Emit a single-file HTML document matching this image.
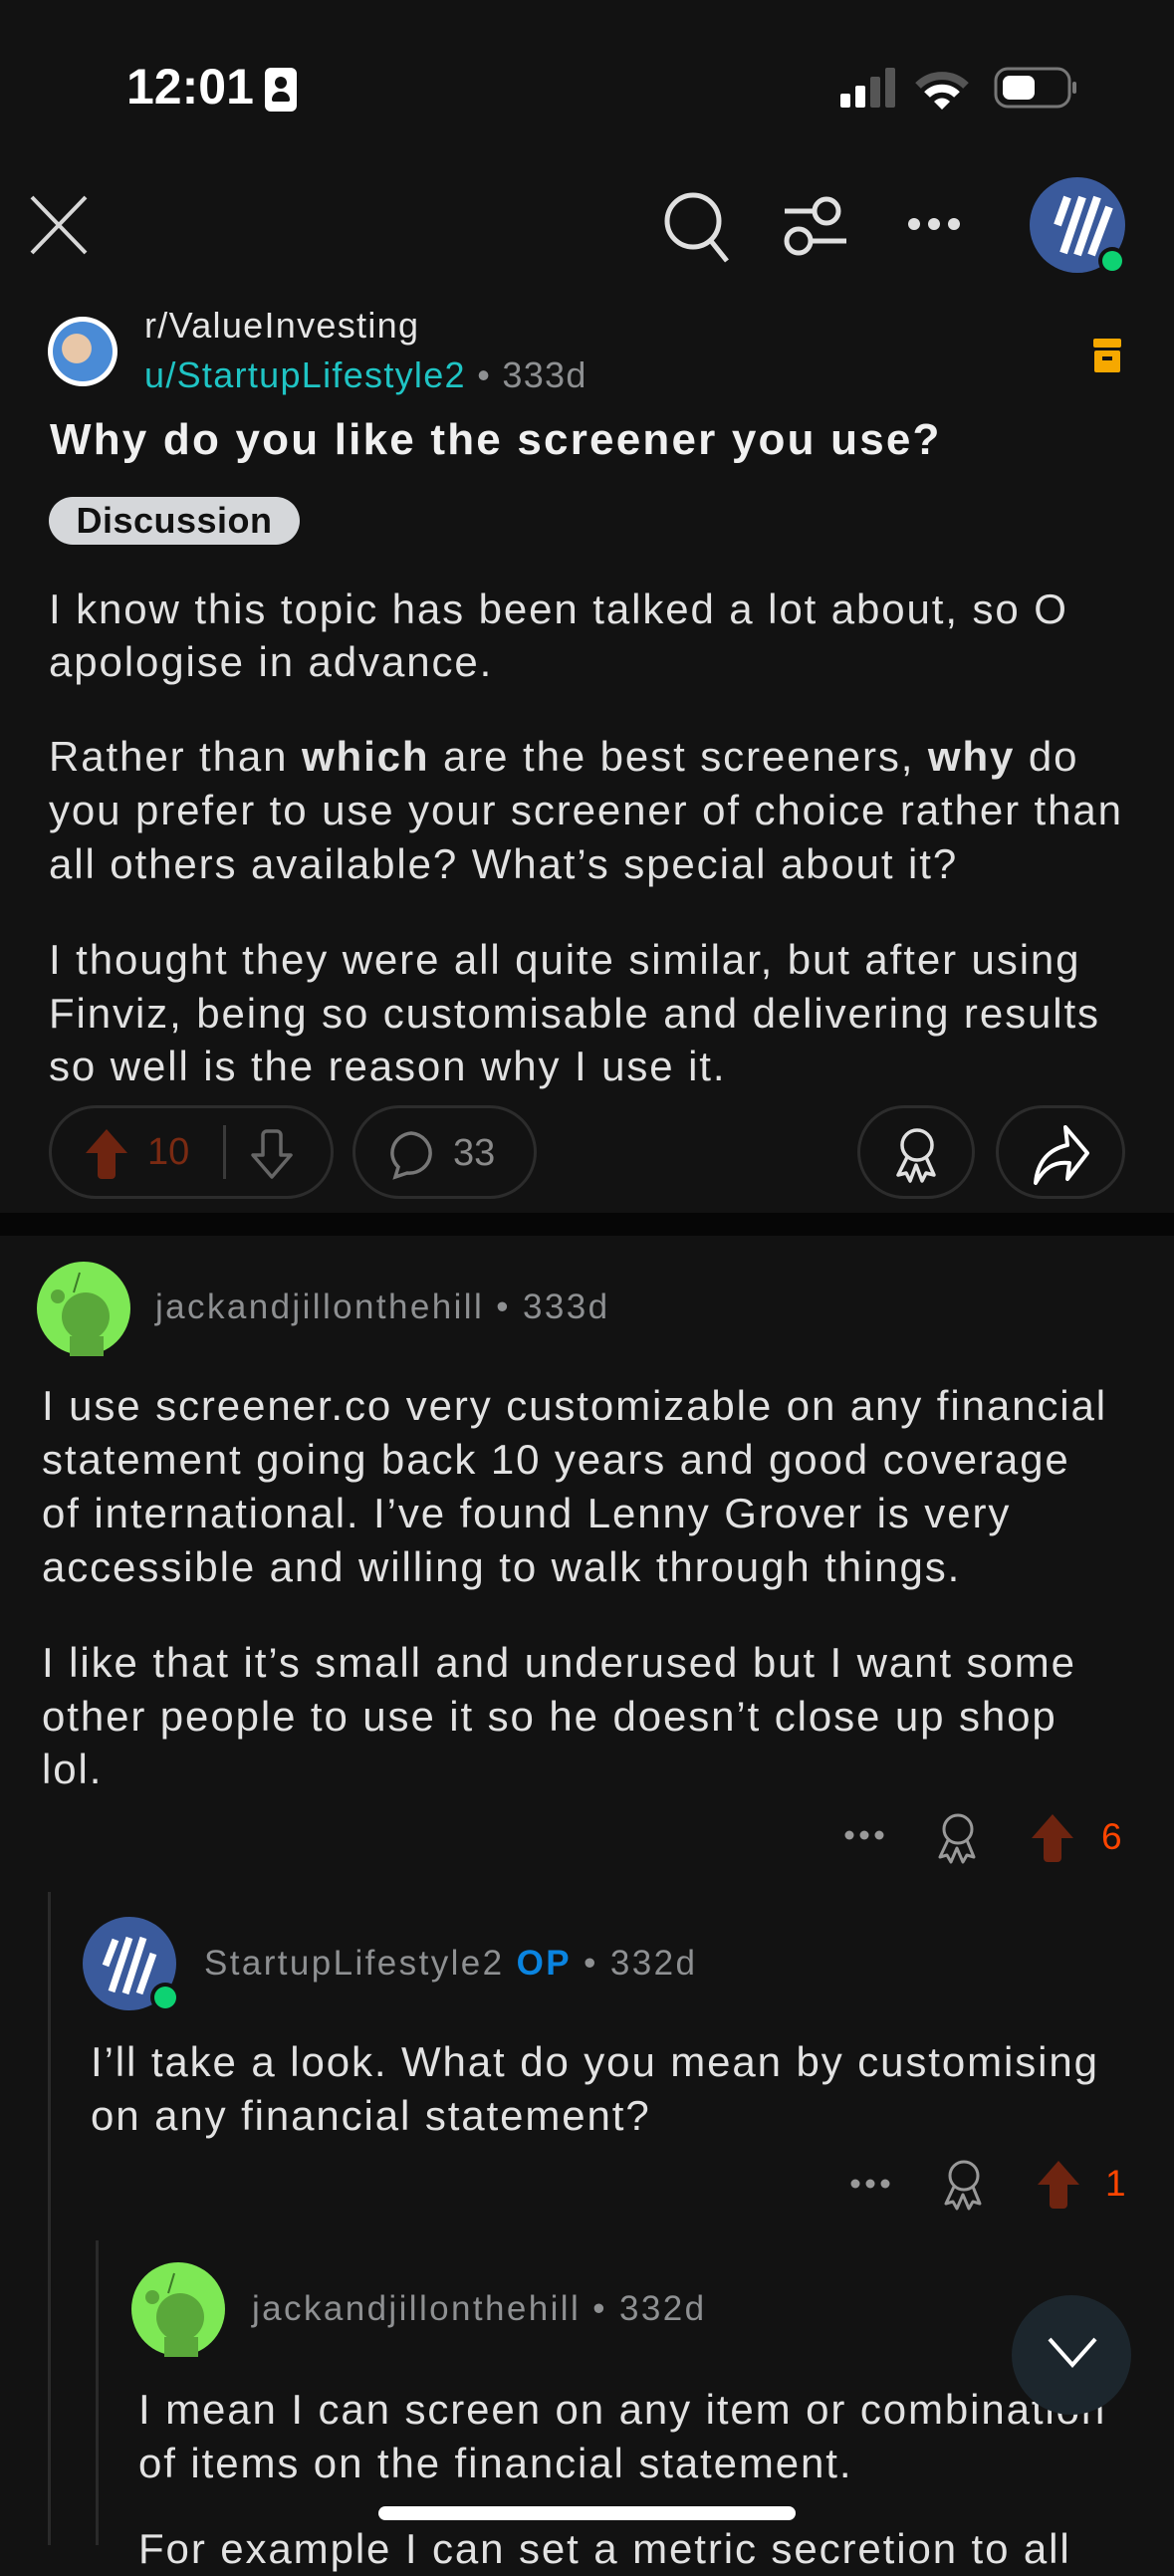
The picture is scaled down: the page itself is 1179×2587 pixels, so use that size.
<!DOCTYPE html>
<html><head><meta charset="utf-8"><style>
*{margin:0;padding:0;box-sizing:border-box}
body{width:1179px;height:2556px;background:#121212;overflow:hidden;position:relative;font-family:"Liberation Sans",sans-serif;color:#e3e3e3}
.a{position:absolute;white-space:nowrap}
.t{font-size:42px;line-height:54px;color:#e2e2e2;letter-spacing:1.9px}
.m{font-size:35px;line-height:40px;color:#8e9092;letter-spacing:2.4px}
.pill{position:absolute;border:3px solid #2c2c2c;border-radius:48px}
</style></head><body>
<!-- status bar -->
<div class="a" style="left:127px;top:58px;font-size:50px;font-weight:bold;color:#fff;letter-spacing:0px">12:01</div>
<div class="a" style="left:266px;top:68px;width:32px;height:44px;background:#fff;border-radius:6px"><div style="position:absolute;left:10px;top:9px;width:12px;height:12px;border-radius:50%;background:#121212"></div><div style="position:absolute;left:7px;top:24px;width:18px;height:10px;border-radius:8px 8px 2px 2px;background:#121212"></div></div>
<svg class="a" style="left:842px;top:66px" width="240" height="46">
<rect x="2" y="28" width="10" height="14" rx="2" fill="#fff"/><rect x="17" y="20" width="10" height="22" rx="2" fill="#fff"/><rect x="32" y="11" width="10" height="31" rx="2" fill="#555"/><rect x="47" y="2" width="10" height="40" rx="2" fill="#555"/>
<path d="M80 20 a34 34 0 0 1 48 0" stroke="#555" stroke-width="8" fill="none"/><path d="M89 29 a21 21 0 0 1 30 0" stroke="#fff" stroke-width="8" fill="none"/><path d="M96 36 l8 8 l8 -8 a11 11 0 0 0 -16 0z" fill="#fff"/>
<rect x="158" y="3" width="74" height="38" rx="12" stroke="#777" stroke-width="3" fill="none"/><rect x="165" y="10" width="32" height="24" rx="7" fill="#fff"/><rect x="235" y="16" width="4" height="12" rx="2" fill="#777"/>
</svg>
<!-- nav -->
<svg class="a" style="left:28px;top:194px" width="64" height="64"><path d="M4 4 L58 60 M58 4 L4 60" stroke="#d8d8d8" stroke-width="4"/></svg>
<svg class="a" style="left:664px;top:190px" width="72" height="76"><circle cx="32" cy="32" r="26" stroke="#e0e0e0" stroke-width="5" fill="none"/><path d="M50 52 L66 72" stroke="#e0e0e0" stroke-width="5"/></svg>
<svg class="a" style="left:784px;top:196px" width="70" height="66"><circle cx="46" cy="16" r="12" stroke="#e0e0e0" stroke-width="5" fill="none"/><circle cx="18" cy="46" r="12" stroke="#e0e0e0" stroke-width="5" fill="none"/><path d="M4 16 H34 M30 46 H66" stroke="#e0e0e0" stroke-width="5"/></svg>
<svg class="a" style="left:908px;top:214px" width="60" height="22"><circle cx="10" cy="11" r="6" fill="#e0e0e0"/><circle cx="30" cy="11" r="6" fill="#e0e0e0"/><circle cx="50" cy="11" r="6" fill="#e0e0e0"/></svg>
<svg class="a" style="left:1032px;top:176px" width="104" height="104"><circle cx="50" cy="50" r="48" fill="#3a5a9c"/><path d="M30 50 L40 22 M36 78 L55 22 M50 80 L70 22 M64 80 L82 32" stroke="#fff" stroke-width="8"/><circle cx="85" cy="86" r="14" fill="#121212"/><circle cx="85" cy="86" r="10" fill="#0dd272"/></svg>
<!-- subreddit -->
<div class="a" style="left:48px;top:318px;width:70px;height:70px;border-radius:50%;background:#fff;padding:5px"><div style="width:60px;height:60px;border-radius:50%;background:radial-gradient(circle at 40% 45%,#e8c7a8 0 30%,#4a8bd6 31%)"></div></div>
<div class="a" style="left:145px;top:306px;font-size:36px;color:#e6e6e6;letter-spacing:1.3px">r/ValueInvesting</div>
<div class="a" style="left:145px;top:356px;font-size:36px;color:#1fc4c4;letter-spacing:1.3px">u/StartupLifestyle2 <span style="color:#8e9092">• 333d</span></div>
<svg class="a" style="left:1098px;top:340px" width="30" height="36"><rect x="0" y="0" width="28" height="9" rx="2" fill="#f6a800"/><rect x="1" y="12" width="26" height="22" rx="2" fill="#f6a800"/><rect x="9" y="18" width="10" height="4" fill="#121212"/></svg>
<div class="a" style="left:50px;top:417px;font-size:44px;font-weight:bold;color:#f0f0f0;letter-spacing:2.2px">Why do you like the screener you use?</div>
<div class="a" style="left:49px;top:499px;width:252px;height:48px;border-radius:24px;background:#d5d7da;color:#111;font-size:36px;font-weight:bold;line-height:48px;text-align:center;letter-spacing:0.5px">Discussion</div>
<!-- body -->
<div class="a t" style="left:49px;top:585px">I know this topic has been talked a lot about, so O</div>
<div class="a t" style="left:49px;top:638px">apologise in advance.</div>
<div class="a t" style="left:49px;top:733px">Rather than <b>which</b> are the best screeners, <b>why</b> do</div>
<div class="a t" style="left:49px;top:787px">you prefer to use your screener of choice rather than</div>
<div class="a t" style="left:49px;top:841px">all others available? What’s special about it?</div>
<div class="a t" style="left:49px;top:937px">I thought they were all quite similar, but after using</div>
<div class="a t" style="left:49px;top:991px">Finviz, being so customisable and delivering results</div>
<div class="a t" style="left:49px;top:1044px">so well is the reason why I use it.</div>
<!-- actions -->
<div class="pill" style="left:49px;top:1110px;width:286px;height:94px"></div>
<svg class="a" style="left:84px;top:1132px" width="46" height="52"><path d="M23 2 L44 26 H32 V48 a4 4 0 0 1 -4 4 H18 a4 4 0 0 1 -4 -4 V26 H2 Z" fill="#6e2410"/></svg>
<div class="a" style="left:148px;top:1136px;font-size:38px;color:#7a2a12">10</div>
<div class="a" style="left:224px;top:1130px;width:3px;height:54px;background:#3a3a3a"></div>
<svg class="a" style="left:250px;top:1134px" width="46" height="52"><path d="M23 48 L42 26 H32 V6 a4 4 0 0 0 -4 -4 H18 a4 4 0 0 0 -4 4 V26 H4 Z" stroke="#666" stroke-width="3.5" fill="none" stroke-linejoin="round"/></svg>
<div class="pill" style="left:354px;top:1110px;width:185px;height:94px"></div>
<svg class="a" style="left:388px;top:1134px" width="50" height="52"><path d="M25 4 a21 20 0 1 1 -4 40 l-12 4 l3 -10 a21 20 0 0 1 13 -34z" stroke="#777" stroke-width="3.5" fill="none"/></svg>
<div class="a" style="left:455px;top:1137px;font-size:38px;color:#8a8a8a">33</div>
<div class="pill" style="left:861px;top:1110px;width:118px;height:94px"></div>
<svg class="a" style="left:896px;top:1130px" width="50" height="60"><circle cx="25" cy="20" r="15" stroke="#e0e0e0" stroke-width="3.5" fill="none"/><path d="M15 32 L6 50 L14 48 L18 56 L24 40 L30 56 L34 48 L42 50 L34 32" stroke="#e0e0e0" stroke-width="3.5" fill="none" stroke-linejoin="round"/></svg>
<div class="pill" style="left:1000px;top:1110px;width:130px;height:94px"></div>
<svg class="a" style="left:1036px;top:1128px" width="60" height="66"><path d="M34 4 L56 30 L36 56 L38 40 C22 38 12 46 4 60 C6 38 18 26 36 22 Z" stroke="#fff" stroke-width="4" fill="none" stroke-linejoin="round"/></svg>
<div class="a" style="left:0;top:1218px;width:1179px;height:23px;background:#060606"></div>
<!-- comment 1 -->
<svg class="a" style="left:36px;top:1266px" width="96" height="96"><circle cx="48" cy="48" r="47" fill="#7ee855"/><circle cx="50" cy="56" r="24" fill="#5aa83a"/><circle cx="22" cy="36" r="7" fill="#5aa83a"/><path d="M38 32 L44 12" stroke="#3c7a28" stroke-width="2"/><rect x="34" y="76" width="34" height="20" fill="#5aa83a"/></svg>
<div class="a m" style="left:156px;top:1293px">jackandjillonthehill • 333d</div>
<div class="a t" style="left:42px;top:1385px">I use screener.co very customizable on any financial</div>
<div class="a t" style="left:42px;top:1439px">statement going back 10 years and good coverage</div>
<div class="a t" style="left:42px;top:1493px">of international. I’ve found Lenny Grover is very</div>
<div class="a t" style="left:42px;top:1547px">accessible and willing to walk through things.</div>
<div class="a t" style="left:42px;top:1643px">I like that it’s small and underused but I want some</div>
<div class="a t" style="left:42px;top:1697px">other people to use it so he doesn’t close up shop</div>
<div class="a t" style="left:42px;top:1750px">lol.</div>
<svg class="a" style="left:846px;top:1834px" width="44" height="18"><circle cx="7" cy="9" r="4.5" fill="#999"/><circle cx="22" cy="9" r="4.5" fill="#999"/><circle cx="37" cy="9" r="4.5" fill="#999"/></svg>
<svg class="a" style="left:938px;top:1818px" width="48" height="56"><circle cx="24" cy="19" r="14" stroke="#999" stroke-width="3" fill="none"/><path d="M14 30 L6 47 L13 45 L17 52 L23 38 L29 52 L33 45 L40 47 L33 30" stroke="#999" stroke-width="3" fill="none" stroke-linejoin="round"/></svg>
<svg class="a" style="left:1034px;top:1820px" width="46" height="52"><path d="M23 2 L44 26 H32 V46 a4 4 0 0 1 -4 4 H18 a4 4 0 0 1 -4 -4 V26 H2 Z" fill="#6e2410"/></svg>
<div class="a" style="left:1106px;top:1824px;font-size:37px;color:#ff4500">6</div>
<div class="a" style="left:48px;top:1900px;width:3px;height:656px;background:#2a2a2a"></div>
<!-- reply 1 -->
<svg class="a" style="left:82px;top:1922px" width="104" height="104"><circle cx="48" cy="50" r="47" fill="#3a5a9c"/><path d="M24 52 L34 26 M30 78 L48 24 M44 80 L62 24 M58 80 L72 40" stroke="#fff" stroke-width="7"/><circle cx="84" cy="84" r="15" fill="#121212"/><circle cx="84" cy="84" r="11" fill="#0dd272"/></svg>
<div class="a m" style="left:205px;top:1952px">StartupLifestyle2 <b style="color:#0a84e0;font-weight:bold">OP</b> • 332d</div>
<div class="a t" style="left:91px;top:2044px">I’ll take a look. What do you mean by customising</div>
<div class="a t" style="left:91px;top:2098px">on any financial statement?</div>
<svg class="a" style="left:852px;top:2184px" width="44" height="18"><circle cx="7" cy="9" r="4.5" fill="#999"/><circle cx="22" cy="9" r="4.5" fill="#999"/><circle cx="37" cy="9" r="4.5" fill="#999"/></svg>
<svg class="a" style="left:944px;top:2166px" width="48" height="56"><circle cx="24" cy="19" r="14" stroke="#999" stroke-width="3" fill="none"/><path d="M14 30 L6 47 L13 45 L17 52 L23 38 L29 52 L33 45 L40 47 L33 30" stroke="#999" stroke-width="3" fill="none" stroke-linejoin="round"/></svg>
<svg class="a" style="left:1040px;top:2168px" width="46" height="52"><path d="M23 2 L44 26 H32 V46 a4 4 0 0 1 -4 4 H18 a4 4 0 0 1 -4 -4 V26 H2 Z" fill="#6e2410"/></svg>
<div class="a" style="left:1110px;top:2172px;font-size:37px;color:#ff4500">1</div>
<div class="a" style="left:96px;top:2250px;width:3px;height:306px;background:#2a2a2a"></div>
<!-- reply 2 -->
<svg class="a" style="left:131px;top:2271px" width="96" height="96"><circle cx="48" cy="48" r="47" fill="#7ee855"/><circle cx="50" cy="56" r="24" fill="#5aa83a"/><circle cx="22" cy="36" r="7" fill="#5aa83a"/><path d="M38 32 L44 12" stroke="#3c7a28" stroke-width="2"/><rect x="34" y="76" width="34" height="20" fill="#5aa83a"/></svg>
<div class="a m" style="left:253px;top:2299px">jackandjillonthehill • 332d</div>
<div class="a t" style="left:139px;top:2393px">I mean I can screen on any item or combination</div>
<div class="a t" style="left:139px;top:2447px">of items on the financial statement.</div>
<div class="a t" style="left:139px;top:2533px">For example I can set a metric secretion to all</div>
<div class="a" style="left:1016px;top:2305px;width:120px;height:120px;border-radius:50%;background:#1c262d"></div>
<svg class="a" style="left:1050px;top:2345px" width="54" height="34"><path d="M4 4 L27 30 L50 4" stroke="#fff" stroke-width="4" fill="none"/></svg>
<div class="a" style="left:380px;top:2517px;width:419px;height:14px;border-radius:7px;background:#fff"></div>
</body></html>
